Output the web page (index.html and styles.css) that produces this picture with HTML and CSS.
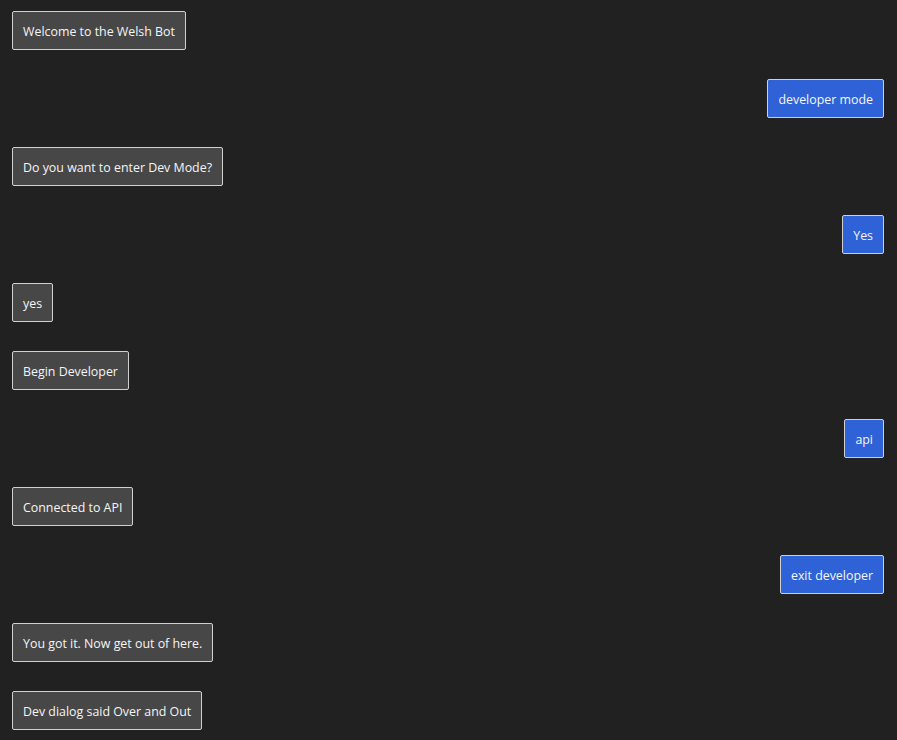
FILE: index.html
```html
<!DOCTYPE html>
<html lang="en">
<head>
    <meta charset="UTF-8">
    <meta name="viewport" content="width=device-width, initial-scale=1.0">
    <title>Welsh Bot</title>
    <link rel="stylesheet" href="styles.css">
</head>
<body>
    <div class="chat">
        <div class="msg bot">Welcome to the Welsh Bot</div>
        <div class="msg user">developer mode</div>
        <div class="msg bot">Do you want to enter Dev Mode?</div>
        <div class="msg user">Yes</div>
        <div class="msg bot">yes</div>
        <div class="msg bot">Begin Developer</div>
        <div class="msg user">api</div>
        <div class="msg bot">Connected to API</div>
        <div class="msg user">exit developer</div>
        <div class="msg bot">You got it. Now get out of here.</div>
        <div class="msg bot">Dev dialog said Over and Out</div>
    </div>
</body>
</html>
```

FILE: styles.css
```css
*{
    box-sizing: border-box;
    margin: 0px;
    padding: 0px;
}
body{
    background: #212121;
    font-family: "Open Sans", "Noto Sans", sans-serif;
    font-size: 12.4px;
    color: #f5f5f5;
}
.chat{
    display: flex;
    flex-direction: column;
    gap: 29px;
    padding: 11px 13px 11px 12px;
}
.msg{
    height: 39px;
    line-height: 40px;
    padding: 0 10px;
    border: 1px solid #d0d0d0;
    border-radius: 2px;
    white-space: nowrap;
    overflow: hidden;
}
.bot{
    align-self: flex-start;
    background: #474747;
}
.user{
    align-self: flex-end;
    background: #2f62d6;
}
```
